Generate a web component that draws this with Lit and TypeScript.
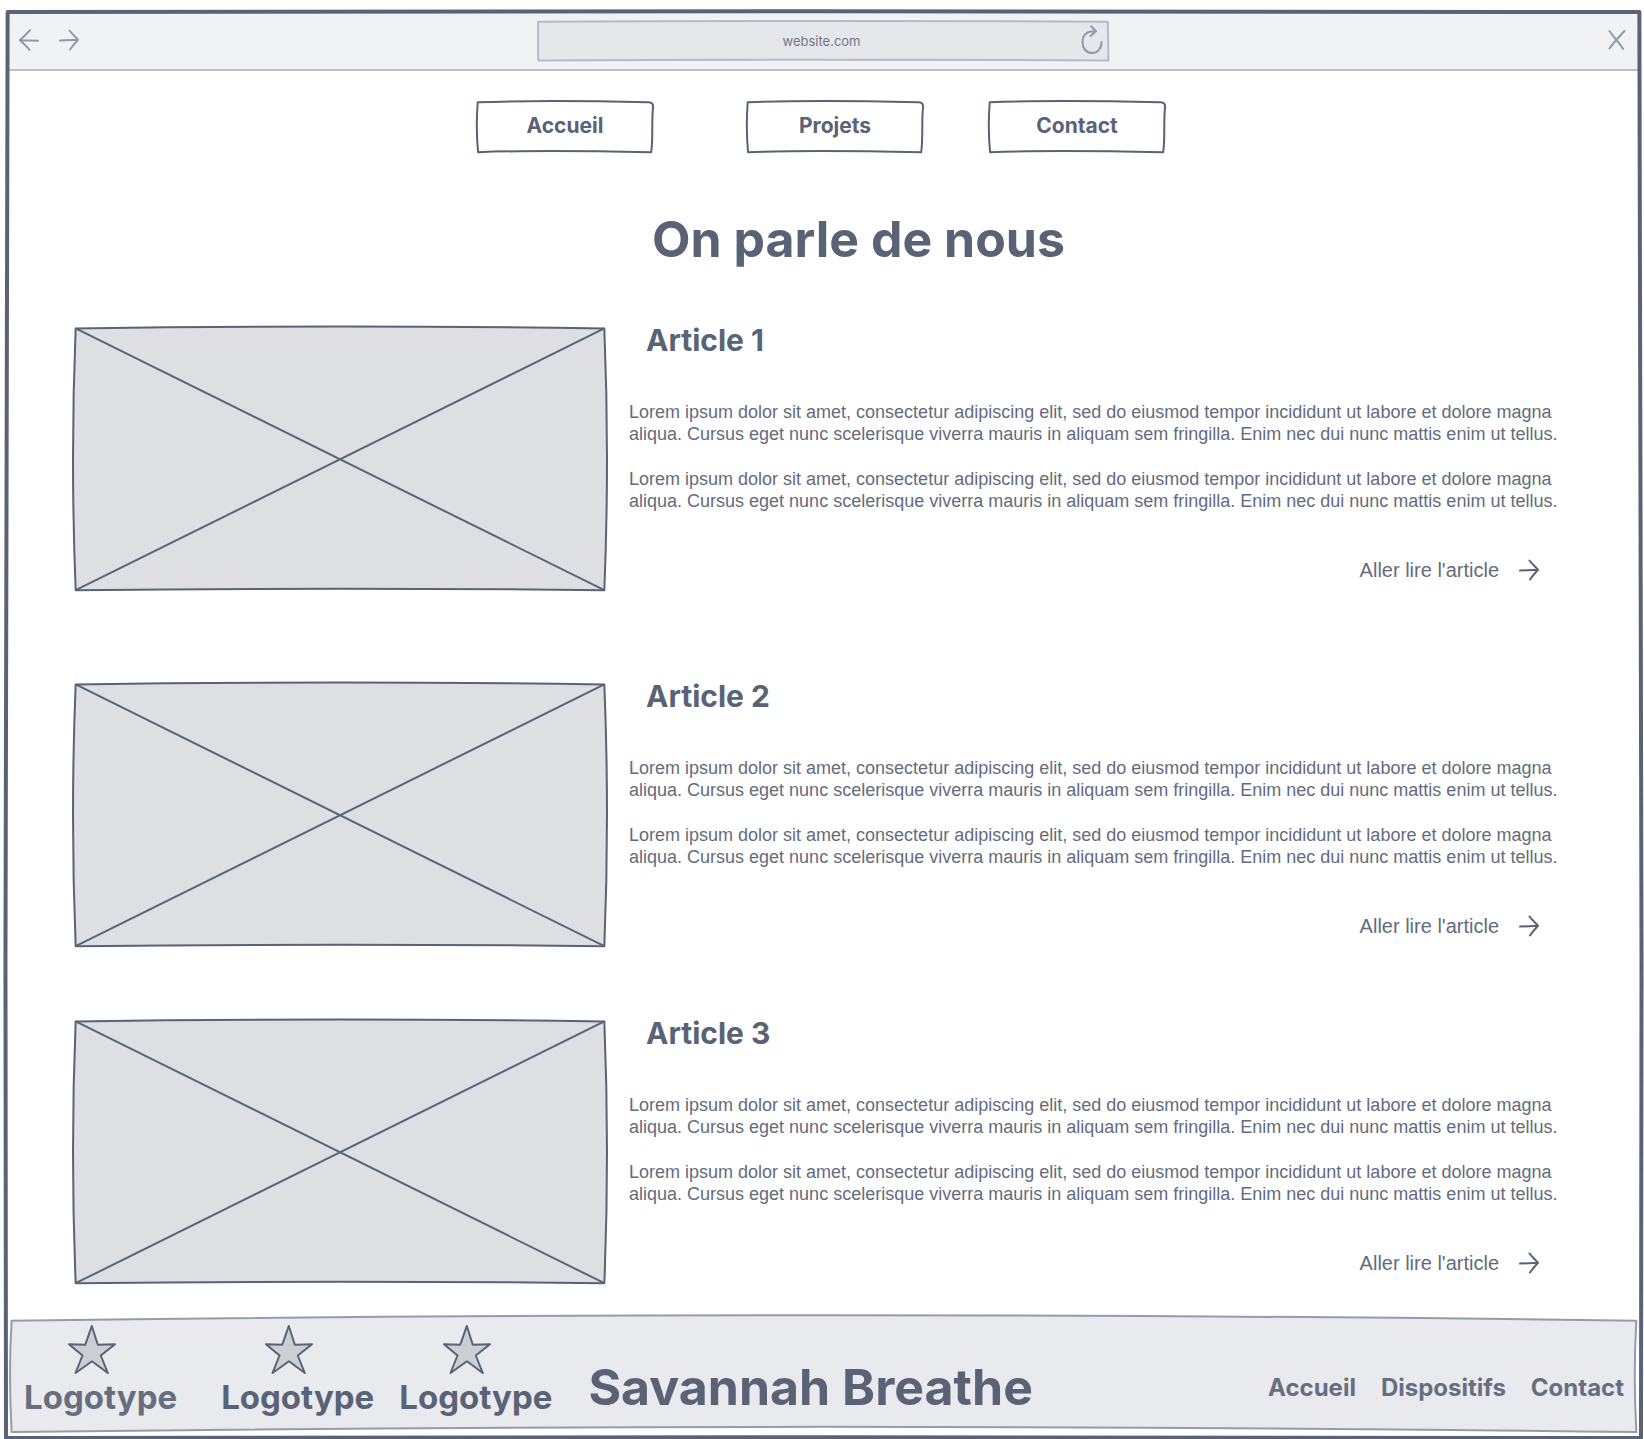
import { LitElement, html, css, svg } from "lit";
import { customElement, property } from "lit/decorators.js";

const LOREM =
  "Lorem ipsum dolor sit amet, consectetur adipiscing elit, sed do eiusmod tempor incididunt ut labore et dolore magna aliqua. Cursus eget nunc scelerisque viverra mauris in aliquam sem fringilla. Enim nec dui nunc mattis enim ut tellus.";

/* Hand-drawn outlines on a 1000 x 1000 grid, stretched over the box they belong to. */
const OUTLINES: Record<string, string> = {
  window: "M1 0 Q500 -1 999 0 Q1001 500 1000 1000 Q500 999 0 1000 Q-1 500 1 0Z",
  address: "M2 20 Q500 -20 998 20 L999 985 Q500 950 2 985Z",
  button:
    "M4 25 C300 -15 600 -5 970 25 Q996 30 995 110 C985 400 996 700 984 985 C700 965 300 945 6 985 C-2 700 -2 300 4 25Z",
  picture:
    "M5 9 Q500 -5 995 9 Q1005 500 995 997 Q500 986 5 997 Q-5 500 5 9Z",
  footer:
    "M1 48 Q500 -44 999 48 Q997 500 999 992 Q500 904 1 992 Q-1 500 1 48Z",
};

/** Fills its positioned parent with a slightly bowed outline. */
@customElement("sketch-outline")
class SketchOutline extends LitElement {
  @property() shape = "button";
  @property({ type: Boolean }) crossed = false;

  static styles = css`
    :host {
      display: block;
      position: absolute;
      inset: 0;
      pointer-events: none;
    }
    .lines {
      display: block;
      width: 100%;
      height: 100%;
      overflow: visible;
      fill: var(--sketch-fill, none);
      stroke: var(--sketch-stroke, #5a6275);
      stroke-width: var(--sketch-width, 2px);
      stroke-linejoin: round;
    }
    .lines path {
      vector-effect: non-scaling-stroke;
    }
    .cross {
      fill: none;
    }
  `;

  render() {
    return html`<svg class="lines" viewBox="0 0 1000 1000" preserveAspectRatio="none" aria-hidden="true">
      <path d=${OUTLINES[this.shape]}></path>
      ${this.crossed
        ? svg`<path class="cross" d="M5 9 L995 997 M995 9 L5 997"></path>`
        : ""}
    </svg>`;
  }
}

const arrowRight = html`<svg class="icon" width="20" height="22" viewBox="0 0 20 22" aria-hidden="true">
  <path d="M1 11.6 L19 10.8 M10.5 1.5 C13 5 17 8 19 10.8 C16 14 13.500 17 11 20.500"></path>
</svg>`;

const arrowLeft = html`<svg class="icon" width="20" height="22" viewBox="0 0 20 22" aria-hidden="true">
  <path d="M19 11.800 L1 11.200 M11 1.200 C8 5 4 8 1 11.200 C4 14 7.500 17 10.500 21"></path>
</svg>`;

@customElement("browser-bar")
class BrowserBar extends LitElement {
  static styles = css`
    :host {
      display: grid;
      grid-template-columns: 1fr minmax(0, 572px) 1fr;
      align-items: center;
      box-sizing: border-box;
      height: 58px;
      padding: 0 12px 0 11px;
      background: #f1f2f4;
      border-bottom: 2px solid #bcc0cc;
      color: #6f7789;
    }
    .icon {
      display: block;
      fill: none;
      stroke: #9299ab;
      stroke-width: 2px;
      stroke-linecap: round;
      stroke-linejoin: round;
    }
    .history {
      display: flex;
      gap: 20px;
      padding-bottom: 3px;
    }
    button {
      padding: 0;
      border: 0;
      background: none;
    }
    .address {
      position: relative;
      display: flex;
      align-items: center;
      height: 40px;
      padding: 0 6px 0 25px;
      --sketch-fill: #e6e7eb;
      --sketch-stroke: #b4bac7;
    }
    .url {
      position: relative;
      flex: 1;
      min-width: 0;
      padding: 0;
      border: 0;
      background: none;
      font: 13px/20px Inter, sans-serif;
      color: inherit;
      text-align: center;
    }
    .reload {
      position: relative;
      padding-bottom: 3px;
    }
    .close {
      justify-self: end;
      padding: 0 1px 3px 0;
    }
  `;

  render() {
    return html`
      <div class="history">
        <button aria-label="Back">${arrowLeft}</button>
        <button aria-label="Forward">${arrowRight}</button>
      </div>
      <div class="address">
        <sketch-outline shape="address"></sketch-outline>
        <input class="url" type="text" aria-label="Address" value="website.com" />
        <button class="reload" aria-label="Reload">
          <svg class="icon" width="22" height="30" viewBox="0 0 22 30" aria-hidden="true">
            <path d="M20.500 17 C20.500 24 16 28 11 28 C5 28 1.500 23 1.500 17 C1.500 10 6 5.500 14.500 6.300 M10 1.200 L15 6.300 L9.500 11"></path>
          </svg>
        </button>
      </div>
      <button class="close" aria-label="Close">
        <svg class="icon" width="18" height="20" viewBox="0 0 18 20" aria-hidden="true">
          <path d="M1.500 1 C6 8 11 12 15 18.800 M16.500 1 C11 7 6 12 1.500 18.500"></path>
        </svg>
      </button>
    `;
  }
}

@customElement("article-row")
class ArticleRow extends LitElement {
  @property() heading = "";

  static styles = css`
    :host {
      display: grid;
      grid-template-columns: minmax(0, 534fr) minmax(0, 945fr);
      gap: 22px;
      align-items: start;
    }
    .picture {
      position: relative;
      aspect-ratio: 534 / 265;
      --sketch-fill: #dedfe3;
    }
    h2 {
      margin: 0 0 47px 17px;
      font: 700 30px/28px Inter, sans-serif;
    }
    p {
      margin: 0 0 23px;
      font-size: 18px;
      line-height: 22px;
      color: #646b7d;
    }
    .more {
      display: flex;
      justify-content: flex-end;
      padding: 22px 35px 0 0;
    }
    a {
      display: inline-flex;
      align-items: center;
      gap: 20px;
      font-size: 20px;
      line-height: 26px;
      color: #646b7d;
      text-decoration: none;
    }
    .icon {
      fill: none;
      stroke: #5a6275;
      stroke-width: 2px;
      stroke-linecap: round;
      stroke-linejoin: round;
    }
  `;

  render() {
    return html`
      <div class="picture"><sketch-outline shape="picture" crossed></sketch-outline></div>
      <div>
        <h2>${this.heading}</h2>
        <p>${LOREM}</p>
        <p>${LOREM}</p>
        <div class="more"><a href="#article">Aller lire l'article ${arrowRight}</a></div>
      </div>
    `;
  }
}

@customElement("site-footer")
class SiteFooter extends LitElement {
  static styles = css`
    :host {
      position: relative;
      display: grid;
      grid-template-columns: auto 1fr auto;
      align-items: end;
      column-gap: 36px;
      box-sizing: border-box;
      min-height: 118px;
      padding: 0 14px 16px 14px;
      font-family: Inter, sans-serif;
      font-weight: 700;
      --sketch-fill: #e9eaee;
      --sketch-stroke: #949bac;
    }
    .logos,
    nav,
    .name {
      position: relative;
    }
    .logos {
      display: flex;
      gap: 25px;
    }
    .logo {
      display: flex;
      flex-direction: column;
      gap: 2px;
      font-size: 33px;
      line-height: 40px;
    }
    .logo:first-child {
      margin-right: 19px;
      color: #676e80;
    }
    .star {
      margin-left: 44px;
      fill: #cbced3;
      stroke: #5a6275;
      stroke-width: 2px;
      stroke-linejoin: round;
    }
    .name {
      font-size: 50px;
      line-height: 60px;
    }
    nav {
      display: flex;
      gap: 25px;
      padding-bottom: 13px;
    }
    a {
      font-size: 24px;
      line-height: 32px;
      color: #676e80;
      text-decoration: none;
    }
  `;

  render() {
    return html`
      <sketch-outline shape="footer"></sketch-outline>
      <div class="logos">
        ${[1, 2, 3].map(
          () => html`<div class="logo">
            <svg class="star" width="48" height="50" viewBox="-1 -1 48 50" aria-hidden="true">
              <path d="M22.800 0 L28.800 18.700 L46 18.200 L31.800 29.500 L38.800 47 L23 35.300 L6.500 47 L13.500 29.500 L0 18.200 L16.300 18.700Z"></path>
            </svg>
            Logotype
          </div>`
        )}
      </div>
      <div class="name">Savannah Breathe</div>
      <nav aria-label="Footer">
        <a href="#accueil">Accueil</a>
        <a href="#dispositifs">Dispositifs</a>
        <a href="#contact">Contact</a>
      </nav>
    `;
  }
}

@customElement("app-root")
class AppRoot extends LitElement {
  static styles = css`
    :host {
      display: flex;
      flex-direction: column;
      box-sizing: border-box;
      min-height: 100vh;
      padding: 12px 3px 2px 6px;
      background: #ffffff;
      color: #5a6275;
      font-family: "Liberation Sans", sans-serif;
    }
    .window {
      position: relative;
      flex: 1;
      display: flex;
      flex-direction: column;
      padding: 1px 2px 5px;
    }
    .frame {
      --sketch-width: 4px;
    }
    .menu {
      display: flex;
      justify-content: center;
      gap: 65px;
      padding: 30px 5px 0 0;
    }
    .menu a {
      position: relative;
      width: 177px;
      padding: 12px 0 14px;
      font: 700 21px/26px Inter, sans-serif;
      color: inherit;
      text-align: center;
      text-decoration: none;
    }
    .menu a:first-child {
      margin-right: 28px;
    }
    h1 {
      margin: 56px 0 0;
      padding-left: 70px;
      font: 700 50px/60px Inter, sans-serif;
      text-align: center;
    }
    main {
      display: flex;
      flex-direction: column;
      gap: 72px;
      padding: 57px 65px 31px;
    }
    article-row:nth-child(2) {
      margin-top: 19px;
    }
    site-footer {
      margin: 0 1px 0 2px;
    }
  `;

  render() {
    return html`
      <div class="window">
        <browser-bar></browser-bar>
        <nav class="menu" aria-label="Main">
          ${["Accueil", "Projets", "Contact"].map(
            (label) => html`<a href="#${label.toLowerCase()}"
              ><sketch-outline></sketch-outline>${label}</a
            >`
          )}
        </nav>
        <h1>On parle de nous</h1>
        <main>
          ${[1, 2, 3].map(
            (n) => html`<article-row heading=${`Article ${n}`}></article-row>`
          )}
        </main>
        <site-footer></site-footer>
        <sketch-outline class="frame" shape="window"></sketch-outline>
      </div>
    `;
  }
}
